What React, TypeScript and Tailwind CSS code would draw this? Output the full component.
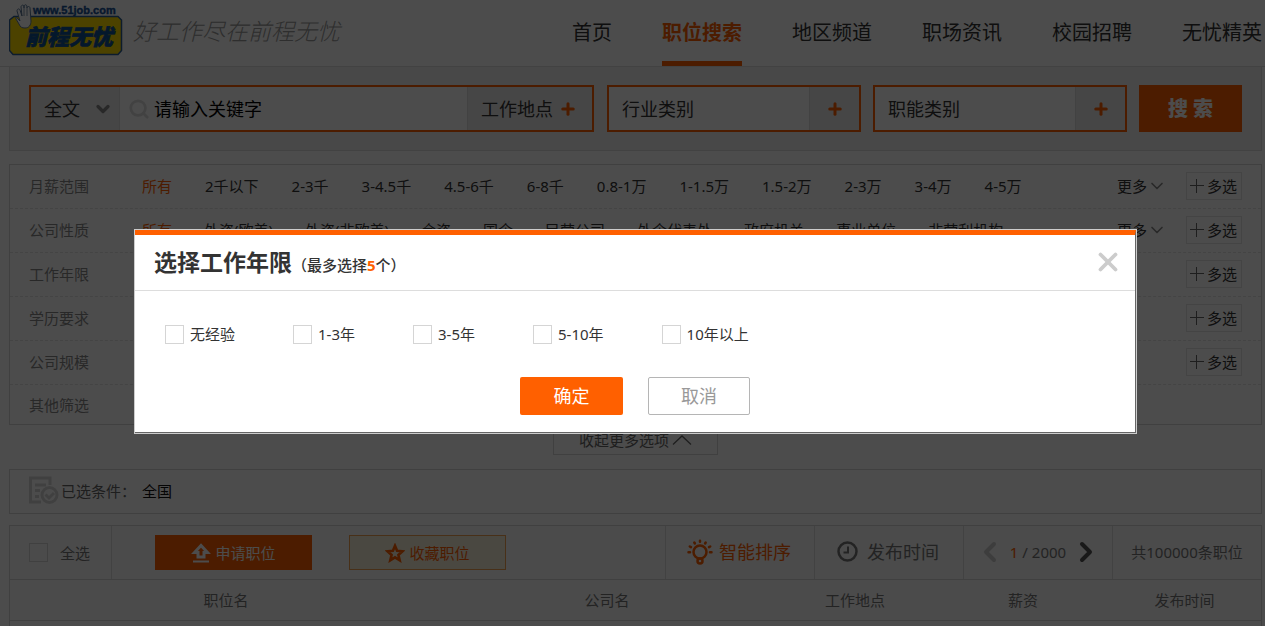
import { useState } from "react";
import type { ReactNode } from "react";
import { ChevronDown, ChevronLeft, ChevronRight, Plus, Search, X } from "lucide-react";

const navItems = ["首页", "职位搜索", "地区频道", "职场资讯", "校园招聘", "无忧精英"];

type Filter = { name: string; options: string[]; gap?: string; more?: boolean; multi?: boolean };

const filters: Filter[] = [
    {
        name: "月薪范围",
        options: ["所有", "2千以下", "2-3千", "3-4.5千", "4.5-6千", "6-8千", "0.8-1万", "1-1.5万", "1.5-2万", "2-3万", "3-4万", "4-5万"],
        gap: "gap-[33px]",
        more: true,
        multi: true,
    },
    {
        name: "公司性质",
        options: ["所有", "外资(欧美)", "外资(非欧美)", "合资", "国企", "民营公司", "外企代表处", "政府机关", "事业单位", "非营利机构"],
        gap: "gap-8",
        more: true,
        multi: true,
    },
    { name: "工作年限", options: [], multi: true },
    { name: "学历要求", options: [], multi: true },
    { name: "公司规模", options: [], multi: true },
    { name: "其他筛选", options: [] },
];

const years = ["无经验", "1-3年", "3-5年", "5-10年", "10年以上"];

const Logo = () => (
    <svg className="w-[114px] h-[52px] shrink-0" viewBox="0 0 114 52" role="img" aria-label="前程无忧">
        <path d="M5 12.5H109L112.500 16V46.500L109 50.500H4L.5 46.500V16Z" fill="#ffdc00" stroke="#2d5f96" strokeWidth="1.500" />
        <text x="24" y="10" fontSize="11" fontWeight="700" fontFamily="Liberation Sans" fill="#1a5296" stroke="#1a5296" strokeWidth=".4">www.51job.com</text>
        <text x="16" y="41" fontSize="22" fontWeight="900" fontFamily="Noto Sans CJK SC" fontStyle="italic" fill="#105094" stroke="#105094" strokeWidth=".6">前程无忧</text>
        <path
            d="M9 15c-2-2-3-2-2 0l3 5c1 3 3 4 6 4 4 0 6-3 6-7l-1-13c0-2-3-2-3 0V3c0-3-3-3-3 0v1-1c0-3-3-2-3 0l1 9-2-6c-1-2-3-1-3 1l3 10z"
            fill="#fff"
            stroke="#5c7796"
            strokeWidth="1"
        />
        <path d="M15 4v8M18 4v8" fill="none" stroke="#8296ad" strokeWidth="1" />
    </svg>
);

const UploadIcon = () => (
    <svg className="w-5 h-5" viewBox="0 0 20 20" fill="none" stroke="currentColor" strokeWidth="3">
        <path d="M10 2.500L3.500 9.500H7V14h6V9.500h3.500Z" />
        <path d="M2 18.500h16" strokeWidth="2" />
    </svg>
);

const StarIcon = () => (
    <svg className="w-5 h-5" viewBox="0 0 20 20" fill="none" stroke="currentColor" strokeWidth="2.600">
        <path d="M10 2.800l2.100 5 5.400.5-4.100 3.600 1.300 5.400-4.700-2.900-4.700 2.900 1.300-5.400-4.100-3.600 5.400-.5z" />
    </svg>
);

const BulbIcon = () => (
    <svg className="w-[26px] h-[26px]" viewBox="0 0 26 26" fill="none" stroke="currentColor" strokeWidth="2.500" strokeLinecap="round">
        <circle cx="13" cy="13" r="6.500" />
        <circle cx="13" cy="22" r="2.500" />
        <path d="M13 1.800v1M7.300 3.500l.6 1M18.700 3.500l-.6 1M2.800 7.500l1.200.7M23.200 7.500l-1.200.7M1.500 13.300h1.500M23 13.300h1.500" />
    </svg>
);

const ClockIcon = () => (
    <svg className="w-[21px] h-[21px]" viewBox="0 0 21 21" fill="none" stroke="currentColor" strokeWidth="2.500">
        <circle cx="10.500" cy="10.500" r="9" />
        <path d="M11 5.500v6H6.500" strokeWidth="2" />
    </svg>
);

const ConditionIcon = () => (
    <svg className="w-[30px] h-[29px] text-[#d8d8d8]" viewBox="0 0 30 29" fill="none" stroke="currentColor" strokeWidth="3">
        <path d="M21 9V2H1.500v24H12" />
        <path d="M6 9h11M6 14.500h5M6 20.500h4" />
        <circle cx="20.500" cy="19" r="7.500" />
        <path d="M16.500 18.500l3.500 3.500 5-5" />
    </svg>
);

const ThinPlus = () => (
    <svg className="w-[14px] h-[14px] text-[#666]" viewBox="0 0 14 14" fill="none" stroke="currentColor">
        <path d="M0 6.500h14M6.500 0v14" />
    </svg>
);

const ThinUp = () => (
    <svg className="w-5 h-[10px]" viewBox="0 0 20 10" fill="none" stroke="currentColor" strokeWidth="1.300">
        <path d="M1 9.500l9-8.500 9 8.500" />
    </svg>
);

const CategoryBox = ({ label }: { label: string }) => (
    <button className="w-[254px] shrink-0 h-[47px] flex items-stretch border-2 border-[#ff6000] bg-white text-left">
        <span className="flex-1 pl-[13px] flex items-center text-lg leading-6">{label}</span>
        <span className="w-[50px] flex items-center justify-center bg-[#eaeaea] border-l border-[#ddd]">
            <Plus className="w-[18px] h-[18px] text-[#ff6000]" strokeWidth={4} />
        </span>
    </button>
);

const SortCell = ({ className, children }: { className: string; children: ReactNode }) => (
    <button className={`w-[149px] shrink-0 flex items-center pb-[2px] border-l border-[#ddd] text-lg leading-6 ${className}`}>{children}</button>
);

const YearsDialog = () => {
    const [picked, setPicked] = useState<string[]>([]);

    const toggle = (year: string) => {
        setPicked((prev) => (prev.includes(year) ? prev.filter((y) => y !== year) : [...prev, year].slice(0, 5)));
    };

    return (
        <div className="fixed inset-0 bg-black/70 flex items-start pt-[229px] pl-[134px] pr-32">
            <div role="dialog" aria-labelledby="years-title" className="w-full bg-white border border-[#ccc]">
                <div className="border-t-[5px] border-t-[#ff6000] border-r border-b border-[#666]">
                    <div className="h-14 flex items-center justify-between pl-[19px] pr-4 border-b border-[#ddd]">
                        <h2 id="years-title" className="flex items-baseline pt-[2px] text-[23px] leading-8 font-bold">
                            选择工作年限
                            <span className="text-[15px] font-medium">
                                （最多选择<b className="text-[#ff6000]">5</b>个）
                            </span>
                        </h2>
                        <button aria-label="关闭" className="pb-[2px]">
                            <X className="w-[30px] h-[30px] text-[#ccc] -mr-1" strokeWidth={3} />
                        </button>
                    </div>
                    <div className="flex gap-[58px] pt-[33px] pl-[30px]">
                        {years.map((year) => (
                            <label key={year} className="flex items-center gap-[6px] leading-5">
                                <input
                                    type="checkbox"
                                    className="w-[19px] h-[19px] appearance-none border border-[#d5d5d5] checked:bg-[#ff6000]"
                                    checked={picked.includes(year)}
                                    onChange={() => toggle(year)}
                                />
                                {year}
                            </label>
                        ))}
                    </div>
                    <div className="flex justify-center gap-[25px] pt-[33px] pb-[17px] text-lg leading-6">
                        <button className="w-[103px] h-[38px] rounded-xs bg-[#ff6000] text-white">确定</button>
                        <button className="w-[102px] h-[38px] rounded-xs border border-[#b5b5b5] text-[#999]">取消</button>
                    </div>
                </div>
            </div>
        </div>
    );
};

const App = () => {
    return (
        <div className="h-screen overflow-hidden bg-white text-[#333] text-[15px] leading-5 font-['Noto_Sans','Noto_Sans_CJK_SC',sans-serif]">
            <header className="h-[67px] flex justify-between border-b border-[#ddd] pl-[9px] pr-[3px]">
                <div className="flex items-start gap-[10px] pt-1">
                    <Logo />
                    <p className="pt-3 text-[23px] leading-7 font-light italic text-[#999] whitespace-nowrap font-['Noto_Sans_CJK_SC',sans-serif]">好工作尽在前程无忧</p>
                </div>
                <nav className="flex gap-[50px] text-xl whitespace-nowrap">
                    {navItems.map((item) => (
                        <a
                            key={item}
                            href="#"
                            className={item === "职位搜索" ? "h-[66px] pt-[19px] leading-7 font-bold text-[#ff6000] border-b-[5px] border-[#ff6000]" : "h-[66px] pt-[19px] leading-7"}
                        >
                            {item}
                        </a>
                    ))}
                </nav>
            </header>

            <main className="pl-[9px] pr-[3px]">
                <form className="flex gap-3 px-[19px] py-[18px] bg-[#f0f0f0] border border-t-0 border-[#dcdcdc]">
                    <div className="flex-1 mr-px h-[47px] flex border-2 border-[#ff6000] bg-white">
                        <div className="relative w-[89px] shrink-0 bg-[#eaeaea] border-r border-[#ddd]">
                            <select aria-label="搜索范围" className="w-full h-full pl-[13px] appearance-none text-lg leading-6">
                                <option>全文</option>
                            </select>
                            <ChevronDown className="w-5 h-5 absolute right-[6px] top-3 text-[#888] pointer-events-none" strokeWidth={4} />
                        </div>
                        <label htmlFor="keyword" className="flex items-center pl-2">
                            <Search className="w-[22px] h-[22px] text-[#ddd]" strokeWidth={3} />
                        </label>
                        <input id="keyword" className="flex-1 min-w-0 pl-1 text-lg leading-6 placeholder:text-black" placeholder="请输入关键字" />
                        <button type="button" className="w-[125px] shrink-0 flex items-center gap-[6px] pl-[13px] bg-[#eaeaea] border-l border-[#ddd] text-lg leading-6">
                            工作地点
                            <Plus className="w-[18px] h-[18px] text-[#ff6000]" strokeWidth={4} />
                        </button>
                    </div>
                    <CategoryBox label="行业类别" />
                    <CategoryBox label="职能类别" />
                    <button type="button" className="w-[103px] h-[47px] shrink-0 bg-[#ff6000] text-white text-xl font-black">搜 索</button>
                </form>

                <section className="mt-[13px] border border-[#d8d8d8]">
                    {filters.map((filter) => (
                        <div key={filter.name} className="h-11 flex items-center px-[19px] pb-[2px] border-b border-dashed border-[#e3e3e3] last:h-[39px] last:border-b-0 last:pb-0 whitespace-nowrap">
                            <h3 className="w-[113px] shrink-0 text-[#888]">{filter.name}</h3>
                            <ul className={`flex-1 flex ${filter.gap ?? ""}`}>
                                {filter.options.map((option, i) => (
                                    <li key={option} className={i === 0 ? "text-[#ff6000]" : ""}>{option}</li>
                                ))}
                            </ul>
                            {filter.more && (
                                <button className="flex items-center mr-[19px]">
                                    更多
                                    <ChevronDown className="w-5 h-5 text-[#888]" strokeWidth={2} />
                                </button>
                            )}
                            {filter.multi && (
                                <button className="w-14 h-7 flex items-center gap-[3px] border border-[#e5e5e5] pl-[3px]">
                                    <ThinPlus />
                                    多选
                                </button>
                            )}
                        </div>
                    ))}
                </section>

                <div className="flex justify-center">
                    <button className="w-[165px] h-[30px] flex items-center justify-center gap-[3px] border border-t-0 border-[#d8d8d8] text-[#666]">
                        收起更多选项
                        <ThinUp />
                    </button>
                </div>

                <section className="mt-[14px] h-[45px] flex items-center pl-[19px] pb-[2px] border border-[#d8d8d8]">
                    <ConditionIcon />
                    <span className="w-[83px] pl-[2px] text-[#666] whitespace-nowrap">已选条件：</span>
                    <span className="text-[#111]">全国</span>
                </section>

                <section className="mt-[11px] border border-[#d8d8d8] text-[#777]">
                    <div className="h-[54px] flex bg-[#fafafa] border-b border-[#d8d8d8]">
                        <label className="w-[102px] shrink-0 flex items-center gap-3 pl-[19px] border-r border-[#ddd]">
                            <input type="checkbox" className="w-[19px] h-[19px] appearance-none border border-[#d5d5d5]" />
                            全选
                        </label>
                        <div className="flex-1 flex items-center gap-[37px] pl-[43px]">
                            <button className="w-[157px] h-[35px] flex items-center justify-center gap-1 bg-[#ff6000] text-white">
                                <UploadIcon />
                                申请职位
                            </button>
                            <button className="w-[157px] h-[35px] flex items-center justify-center gap-1 bg-[#f8f0da] border border-[#f0a050] text-[#ff6000]">
                                <StarIcon />
                                收藏职位
                            </button>
                        </div>
                        <SortCell className="pl-[21px] gap-[6px] text-[#ff6000]">
                            <BulbIcon />
                            智能排序
                        </SortCell>
                        <SortCell className="pl-[22px] gap-[9px]">
                            <ClockIcon />
                            发布时间
                        </SortCell>
                        <div className="w-[149px] shrink-0 flex items-center justify-center gap-1 pb-[2px] border-l border-[#ddd]">
                            <button aria-label="上一页">
                                <ChevronLeft className="w-8 h-8 text-[#ccc]" strokeWidth={3} />
                            </button>
                            <span className="whitespace-nowrap">
                                <b className="font-normal text-[#ff6000]">1</b> / 2000
                            </span>
                            <button aria-label="下一页">
                                <ChevronRight className="w-8 h-8 text-[#555]" strokeWidth={3} />
                            </button>
                        </div>
                        <div className="w-[149px] shrink-0 flex items-center justify-center pb-[2px] border-l border-[#ddd]">共100000条职位</div>
                    </div>
                    <table className="w-full table-fixed">
                        <thead>
                            <tr className="h-10 bg-[#fcfcfc] border-b border-[#d8d8d8]">
                                <th className="font-normal">职位名</th>
                                <th className="w-[330px] font-normal">公司名</th>
                                <th className="w-[166px] font-normal">工作地点</th>
                                <th className="w-[170px] font-normal">薪资</th>
                                <th className="w-[153px] font-normal">发布时间</th>
                            </tr>
                        </thead>
                        <tbody>
                            <tr className="h-16">
                                <td colSpan={5}></td>
                            </tr>
                        </tbody>
                    </table>
                </section>
            </main>

            <YearsDialog />
        </div>
    );
};

export default App;
